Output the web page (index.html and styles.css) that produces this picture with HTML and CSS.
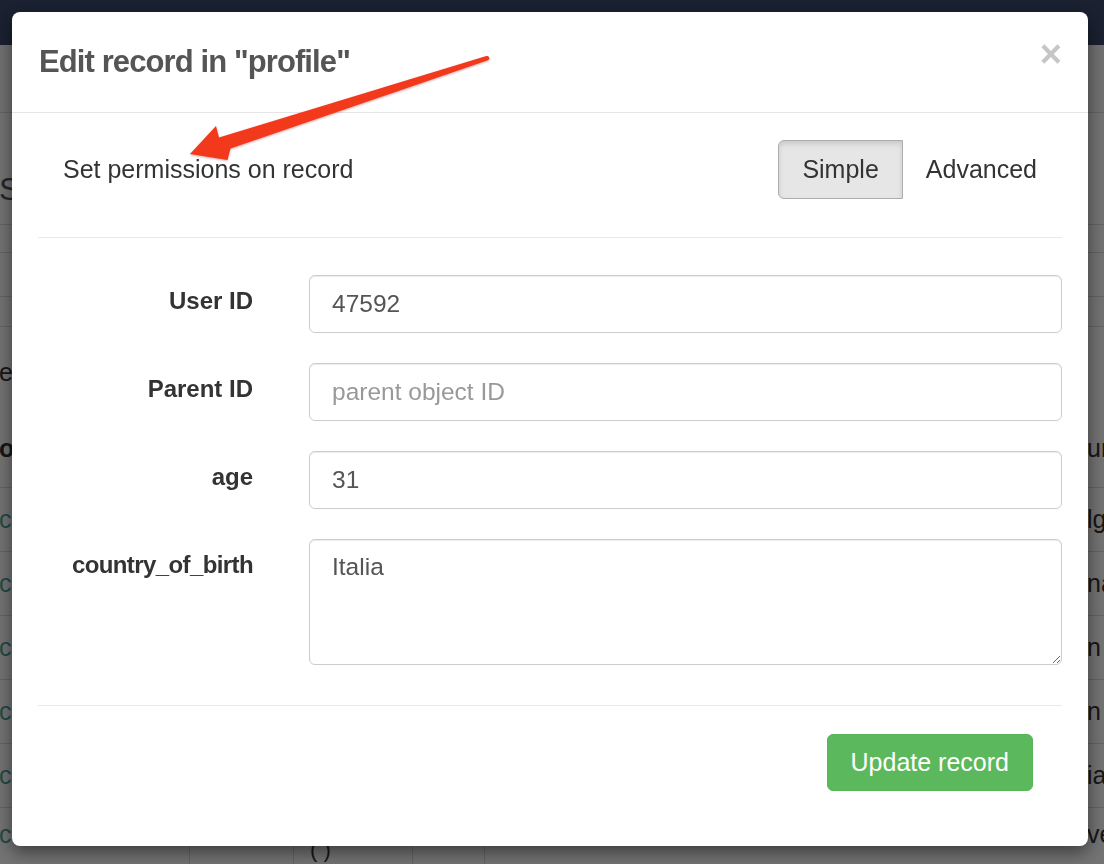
FILE: index.html
```html
<!DOCTYPE html>
<html lang="en">
<head>
<meta charset="utf-8">
<title>Edit record</title>
<link rel="stylesheet" href="styles.css">
</head>
<body>
<div class="page">
  <nav class="navbar"></nav>
  <div class="bg-row bg-row-top"></div>
  <div class="bg-row bg-row-heading"><span class="bg-edge bg-heading">S</span></div>
  <div class="bg-row bg-row-thin"></div>
  <div class="bg-row bg-row-mid"></div>
  <div class="bg-row bg-row-small"></div>
  <div class="bg-row bg-row-intro"><span class="bg-edge">e</span></div>
  <div class="bg-row bg-row-head bg-grid">
    <span class="bg-cell"><span class="bg-edge bg-bold">o</span></span><span class="bg-cell"></span><span class="bg-cell"></span><span class="bg-cell"></span><span class="bg-cell"></span><span class="bg-cell bg-right">un</span>
  </div>
  <div class="bg-row bg-row-data bg-grid">
    <span class="bg-cell"><span class="bg-edge bg-link">ca</span></span><span class="bg-cell"></span><span class="bg-cell"></span><span class="bg-cell"></span><span class="bg-cell"></span><span class="bg-cell bg-right">lg</span>
  </div>
  <div class="bg-row bg-row-data bg-grid">
    <span class="bg-cell"><span class="bg-edge bg-link">ca</span></span><span class="bg-cell"></span><span class="bg-cell"></span><span class="bg-cell"></span><span class="bg-cell"></span><span class="bg-cell bg-right">na</span>
  </div>
  <div class="bg-row bg-row-data bg-grid">
    <span class="bg-cell"><span class="bg-edge bg-link">ca</span></span><span class="bg-cell"></span><span class="bg-cell"></span><span class="bg-cell"></span><span class="bg-cell"></span><span class="bg-cell bg-right">n</span>
  </div>
  <div class="bg-row bg-row-data bg-grid">
    <span class="bg-cell"><span class="bg-edge bg-link">ca</span></span><span class="bg-cell"></span><span class="bg-cell"></span><span class="bg-cell"></span><span class="bg-cell"></span><span class="bg-cell bg-right">n</span>
  </div>
  <div class="bg-row bg-row-data bg-grid">
    <span class="bg-cell"><span class="bg-edge bg-link">ca</span></span><span class="bg-cell"></span><span class="bg-cell"></span><span class="bg-cell"></span><span class="bg-cell"></span><span class="bg-cell bg-right">ia</span>
  </div>
  <div class="bg-row bg-row-last bg-grid">
    <span class="bg-cell bg-cell-top"><span class="bg-edge bg-link">ca</span></span><span class="bg-cell"></span><span class="bg-cell bg-paren">( )</span><span class="bg-cell"></span><span class="bg-cell"></span><span class="bg-cell bg-right bg-cell-top">ve</span>
  </div>
</div>

<div class="backdrop"></div>

<div class="modal-layer">
  <div class="modal">
    <div class="modal-header">
      <h4 class="modal-title">Edit record in "profile"</h4>
      <button class="close" type="button">&times;</button>
    </div>
    <div class="modal-body">
      <div class="perm-row">
        <span class="perm-text">Set permissions on record</span>
        <div class="btn-group">
          <button class="btn btn-toggle active" type="button">Simple</button>
          <button class="btn btn-toggle btn-plain" type="button">Advanced</button>
        </div>
      </div>
      <hr class="divider divider-top">
      <form class="record-form">
        <div class="form-row">
          <label class="form-label" for="f-user">User ID</label>
          <input class="form-input" id="f-user" type="text" value="47592">
        </div>
        <div class="form-row">
          <label class="form-label" for="f-parent">Parent ID</label>
          <input class="form-input" id="f-parent" type="text" placeholder="parent object ID">
        </div>
        <div class="form-row">
          <label class="form-label" for="f-age">age</label>
          <input class="form-input" id="f-age" type="text" value="31">
        </div>
        <div class="form-row">
          <label class="form-label form-label-long" for="f-country">country_of_birth</label>
          <textarea class="form-input form-textarea" id="f-country">Italia</textarea>
        </div>
      </form>
      <hr class="divider divider-bottom">
      <div class="modal-footer">
        <button class="btn btn-success" type="button">Update record</button>
      </div>
    </div>
  </div>
</div>

<svg class="annotation" width="1104" height="864" viewBox="0 0 1104 864" aria-hidden="true">
  <path class="arrow" d="M190 154 L216 126 L219 137.5 L486.4 56.1 A2 2 0 0 1 487.8 60.2 L230.5 148.5 L227.5 160 Z"/>
</svg>
</body>
</html>
```

FILE: styles.css
```css
* { box-sizing: border-box; }

html, body {
  margin: 0;
  padding: 0;
  width: 1104px;
  height: 864px;
  overflow: hidden;
}

body {
  font-family: "Liberation Sans", Arial, Helvetica, sans-serif;
  color: #333;
  background: #fff;
}

/* ---------- background page (dimmed by backdrop) ---------- */
.page {
  height: 864px;
  overflow: hidden;
  background: #fff;
  font-size: 25px;
}

.navbar {
  height: 45px;
  background: #3a496b;
}

.bg-row {
  display: flex;
  align-items: center;
  border-bottom: 1px solid #ddd;
  overflow: hidden;
  white-space: nowrap;
}

.bg-row-top { height: 68px; background: #fafafa; }
.bg-row-heading { height: 112px; padding-top: 42px; }
.bg-row-thin { height: 28px; }
.bg-row-mid { height: 44px; }
.bg-row-small { height: 30px; }
.bg-row-intro { height: 83px; border-bottom: none; padding-top: 8px; }
.bg-row-head { height: 78px; }
.bg-row-data { height: 64px; }
.bg-row-last { height: 57px; border-bottom: none; }

/* left-edge texts: only the sliver outside the modal is visible */
.bg-edge {
  margin-left: -1px;
  white-space: nowrap;
}

.bg-heading {
  font-size: 32px;
  color: #555;
}

.bg-grid {
  display: grid;
  grid-template-columns: 189px 104px 119px 72px 601px 19px;
  align-items: stretch;
}

.bg-cell {
  display: flex;
  align-items: center;
  border-left: 1px solid #ddd;
  overflow: hidden;
  white-space: nowrap;
}

.bg-cell:first-child { border-left: none; }

.bg-bold { font-weight: bold; }
.bg-link { color: #4fa597; }

.bg-right {
  border-left: none;
  padding-left: 2px;
}

.bg-cell-top {
  align-items: start;
  padding-top: 12px;
  line-height: 1.15;
}

.bg-paren {
  align-items: end;
  padding-left: 16px;
  font-size: 22px;
  line-height: 1;
  padding-bottom: 4px;
}

.backdrop {
  position: fixed;
  inset: 0;
  background: rgba(0, 0, 0, 0.55);
}

/* ---------- modal ---------- */
.modal-layer {
  position: fixed;
  inset: 0;
  padding: 12px 16px 0 12px;
}

.modal {
  width: 1076px;
  background: #fff;
  border-radius: 8px;
  box-shadow: 0 6px 18px rgba(0, 0, 0, 0.5);
}

.modal-header {
  height: 101px;
  display: flex;
  align-items: center;
  justify-content: space-between;
  padding: 0 26px 0 27px;
  border-bottom: 1px solid #e5e5e5;
}

.modal-title {
  margin: 0;
  font-size: 31px;
  line-height: 1.1;
  font-weight: bold;
  letter-spacing: -0.9px;
  color: #555;
}

.close {
  margin: 0 0 16px 0;
  padding: 0;
  border: none;
  background: transparent;
  font-family: "Liberation Sans", Arial, sans-serif;
  font-size: 38px;
  font-weight: bold;
  line-height: 1;
  color: #c6c6c6;
  cursor: pointer;
}

.modal-body {
  padding: 27px 26px 0;
}

.perm-row {
  height: 59px;
  display: flex;
  align-items: center;
  justify-content: space-between;
  padding: 0 2px 0 25px;
}

.perm-text {
  font-size: 25px;
  color: #333;
}

.btn-group {
  display: flex;
  height: 59px;
}

.btn {
  font-family: "Liberation Sans", Arial, sans-serif;
  font-size: 25px;
  line-height: 1;
  cursor: pointer;
}

.btn-toggle {
  height: 59px;
  padding: 0 23px;
  color: #333;
  background: #fff;
  border: 1px solid #fff;
}

.btn-toggle.active {
  background: #e6e6e6;
  border-color: #adadad;
  border-radius: 6px 0 0 6px;
  box-shadow: inset 0 3px 5px rgba(0, 0, 0, 0.125);
}

.btn-plain {
  border-radius: 0 6px 6px 0;
  padding: 0 22px;
}

.divider {
  border: none;
  border-top: 1px solid #e8e8e8;
  margin: 0;
}

.divider-top { margin: 38px 0 37px; }
.divider-bottom { margin: 40px 0 0; }

.record-form {
  display: flex;
  flex-direction: column;
  gap: 30px;
}

.form-row {
  display: grid;
  grid-template-columns: 215px 1fr;
  column-gap: 56px;
  align-items: start;
}

.form-label {
  padding-top: 8px;
  text-align: right;
  font-size: 24px;
  line-height: 35px;
  font-weight: bold;
  color: #333;
  white-space: nowrap;
}

.form-label-long { letter-spacing: -0.6px; }

.form-input {
  display: block;
  width: 100%;
  height: 58px;
  margin: 0;
  padding: 0 22px;
  font-family: "Liberation Sans", Arial, sans-serif;
  font-size: 24.5px;
  color: #555;
  background: #fff;
  border: 1px solid #ccc;
  border-radius: 6px;
  box-shadow: inset 0 1px 1px rgba(0, 0, 0, 0.075);
  outline: none;
}

.form-input::placeholder { color: #999; }

.form-textarea {
  height: 126px;
  padding: 9px 22px;
  line-height: 35px;
  resize: vertical;
}

.modal-footer {
  display: flex;
  justify-content: flex-end;
  padding: 28px 29px 55px 0;
}

.btn-success {
  height: 57px;
  padding: 0 23px;
  color: #fff;
  background: #5cb85c;
  border: 1px solid #57b557;
  border-radius: 6px;
}

/* ---------- annotation arrow ---------- */
.annotation {
  position: fixed;
  left: 0;
  top: 0;
  pointer-events: none;
}

.arrow {
  fill: #f3391c;
  filter: drop-shadow(0 1px 1px rgba(120, 0, 0, 0.35));
}
```
